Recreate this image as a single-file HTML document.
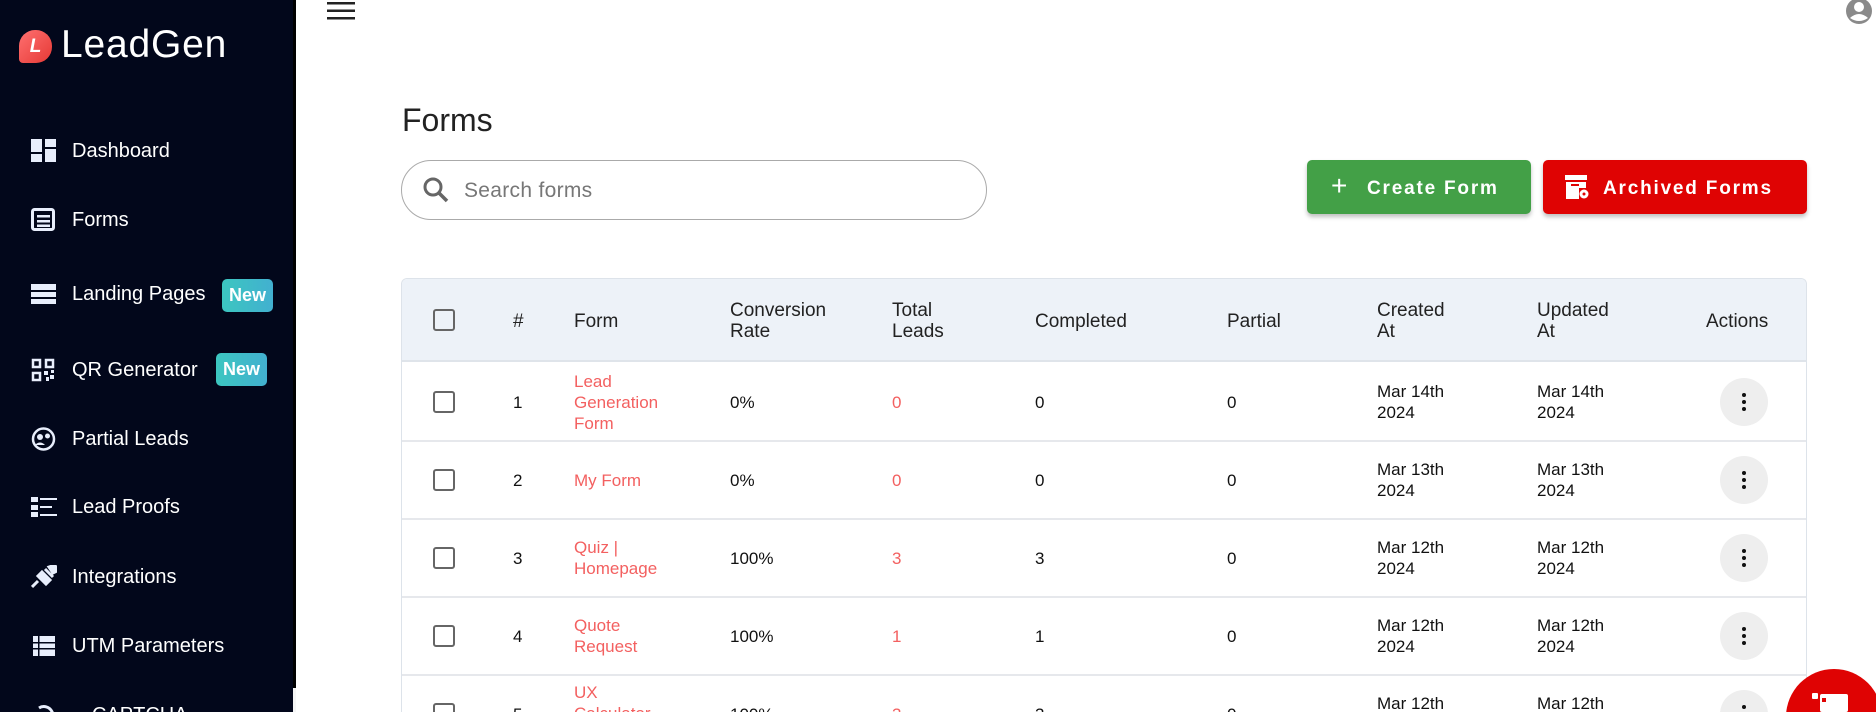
<!DOCTYPE html>
<html><head><meta charset="utf-8"><style>
*{box-sizing:border-box;margin:0;padding:0}
html,body{width:1876px;height:712px;overflow:hidden}
body{background:#fff;font-family:"Liberation Sans",sans-serif;position:relative;color:#111}
.wrap{position:absolute;left:0;top:0;width:1876px;height:712px;overflow:hidden}
.sb{position:absolute;left:0;top:0;width:293px;height:712px;background:#02071b}
.sbedge{position:absolute;left:293px;top:0;width:3px;height:688px;background:#000}
.logo{position:absolute;left:19px;top:30px;width:33px;height:33px;background:linear-gradient(135deg,#ff7070,#e53935);border-radius:16px 16px 16px 4px;color:#fff;font-weight:bold;font-size:19px;text-align:center;line-height:33px;font-style:italic}
.brand{position:absolute;left:61px;top:22px;color:#fff;font-size:39px;line-height:46px;letter-spacing:0.8px}
.mi{position:absolute;left:0;height:30px;width:293px;color:#fff;font-size:20px}
.mi svg{position:absolute;left:31px;top:3px}
.mi span.t{position:absolute;left:72px;top:4px}
.new{position:absolute;height:33px;width:51px;border-radius:5px;background:linear-gradient(90deg,#3cc6c0,#42b0d0);color:#fff;font-weight:bold;font-size:18px;text-align:center;line-height:33px}
.title{position:absolute;left:402px;top:102px;font-size:32px;color:#222}
.search{position:absolute;left:401px;top:160px;width:586px;height:60px;border:1.5px solid #aaa;border-radius:30px}
.search span{position:absolute;left:62px;top:18px;font-size:21px;color:#777;letter-spacing:0.3px}
.btn{position:absolute;top:160px;height:54px;border-radius:5px;color:#fff;font-weight:bold;font-size:19px;letter-spacing:1.8px;box-shadow:0 3px 4px rgba(0,0,0,.25);line-height:54px}
.tbl{position:absolute;left:401px;top:278px;width:1406px;height:434px;border:1px solid #dde3ea;border-bottom:none;border-radius:6px 6px 0 0;overflow:hidden}
.hd{position:absolute;left:0;top:0;width:100%;height:83px;background:#edf2f8;border-bottom:2px solid #dfe4ea}
.c{position:absolute;font-size:19px;line-height:21px;color:#222}
.r{position:absolute;font-size:17px;line-height:21px;color:#111}
.red{color:#f36060}
.line{position:absolute;left:0;width:100%;height:2px;background:#e6e8ec}
.cb{position:absolute;width:22px;height:22px;border:2.5px solid #666;border-radius:3px}
.act{position:absolute;width:48px;height:48px;border-radius:24px;background:#eee}
.act i{position:absolute;left:22px;width:4px;height:4px;border-radius:2px;background:#111}
</style></head><body><div class="wrap">
<div class="sb"></div><div class="sbedge"></div>
<div class="logo">L</div>
<div class="brand">LeadGen</div>

<div class="mi" style="top:136px"><svg width="26" height="24" viewBox="0 0 26 24"><rect x="0" y="0" width="11" height="13" fill="#e8eefc"/><rect x="0" y="15" width="11" height="8" fill="#e8eefc"/><rect x="14" y="0" width="11" height="8" fill="#e8eefc"/><rect x="14" y="10" width="11" height="13" fill="#e8eefc"/></svg><span class="t">Dashboard</span></div>
<div class="mi" style="top:205px"><svg width="26" height="24" viewBox="0 0 26 24"><rect x="1.5" y="1.5" width="21" height="20" rx="2" fill="none" stroke="#e8eefc" stroke-width="3"/><rect x="6" y="7" width="13" height="2.5" fill="#e8eefc"/><rect x="6" y="12" width="13" height="2.5" fill="#e8eefc"/><rect x="6" y="16.5" width="13" height="2.5" fill="#e8eefc"/></svg><span class="t">Forms</span></div>
<div class="mi" style="top:279px"><svg width="26" height="24" viewBox="0 0 26 24"><rect x="0" y="2" width="25" height="6" fill="#e8eefc"/><rect x="0" y="10" width="25" height="5" fill="#e8eefc"/><rect x="0" y="17" width="25" height="5" fill="#e8eefc"/></svg><span class="t">Landing Pages</span></div>
<div class="new" style="left:222px;top:279px">New</div>
<div class="mi" style="top:355px"><svg width="26" height="24" viewBox="0 0 26 24"><g fill="none" stroke="#e8eefc" stroke-width="2.5"><rect x="2" y="2" width="7" height="7"/><rect x="15" y="2" width="7" height="7"/><rect x="2" y="15" width="7" height="7"/></g><rect x="13" y="13" width="4" height="4" fill="#e8eefc"/><rect x="19" y="17" width="4" height="4" fill="#e8eefc"/><rect x="15" y="19" width="3" height="4" fill="#e8eefc"/><rect x="20" y="12" width="3" height="3" fill="#e8eefc"/></svg><span class="t">QR Generator</span></div>
<div class="new" style="left:216px;top:353px">New</div>
<div class="mi" style="top:424px"><svg width="26" height="24" viewBox="0 0 26 24"><circle cx="12.5" cy="12" r="10.5" fill="none" stroke="#e8eefc" stroke-width="2.5"/><circle cx="9" cy="10" r="3" fill="#e8eefc"/><circle cx="16.5" cy="9" r="2.5" fill="#e8eefc"/><path d="M4 18 Q9 13 14 18" fill="#e8eefc"/></svg><span class="t">Partial Leads</span></div>
<div class="mi" style="top:492px"><svg width="26" height="24" viewBox="0 0 26 24"><rect x="0" y="2" width="7" height="5" fill="#e8eefc"/><rect x="9" y="3" width="17" height="2" fill="#e8eefc"/><rect x="0" y="10" width="7" height="5" fill="#e8eefc"/><rect x="9" y="11" width="12" height="2" fill="#e8eefc"/><rect x="0" y="17" width="7" height="5" fill="#e8eefc"/><rect x="9" y="19" width="17" height="2" fill="#e8eefc"/></svg><span class="t">Lead Proofs</span></div>
<div class="mi" style="top:562px"><svg width="26" height="24" viewBox="0 0 26 24"><path d="M1 22 L7 16 M14 4 L22 12 M11 7 L19 15 L15 19 L7 11Z M18 2 L24 0 L26 6 L22 8Z" stroke="#e8eefc" stroke-width="3" fill="#e8eefc"/></svg><span class="t">Integrations</span></div>
<div class="mi" style="top:631px"><svg width="26" height="24" viewBox="0 0 26 24"><rect x="2" y="2" width="22" height="20" fill="#e8eefc"/><rect x="2" y="8" width="22" height="1.5" fill="#02071b"/><rect x="2" y="14" width="22" height="1.5" fill="#02071b"/><rect x="7" y="2" width="1.5" height="20" fill="#02071b"/></svg><span class="t">UTM Parameters</span></div>
<div class="mi" style="top:700px;height:12px;overflow:hidden"><svg width="26" height="24" viewBox="0 0 26 24"><path d="M4 14 A9 9 0 1 0 8 5" fill="none" stroke="#e8eefc" stroke-width="3"/></svg><span class="t" style="left:92px">CAPTCHA</span></div>
<div style="position:absolute;left:293px;top:688px;width:3px;height:24px;background:#f5f5f5"></div>

<svg style="position:absolute;left:327px;top:2px" width="28" height="18"><rect y="0" width="28" height="2.5" fill="#222"/><rect y="7.5" width="28" height="2.5" fill="#222"/><rect y="15" width="28" height="2.5" fill="#222"/></svg>
<svg style="position:absolute;left:1845px;top:0" width="28" height="26" viewBox="0 0 28 26"><circle cx="14" cy="11" r="13" fill="#8a8a8a"/><circle cx="14" cy="7" r="5" fill="#fff"/><path d="M5 18 Q14 10 23 18 Q14 24 5 18Z" fill="#fff"/></svg>

<div class="title">Forms</div>
<div class="search"><svg style="position:absolute;left:20px;top:15px" width="28" height="28" viewBox="0 0 28 28"><circle cx="11" cy="11" r="8" fill="none" stroke="#666" stroke-width="3"/><path d="M17 17 L25 25" stroke="#666" stroke-width="3.5"/></svg><span>Search forms</span></div>

<div class="btn" style="left:1307px;width:224px;background:#43a047"><span style="position:absolute;left:24px;top:-1px;font-size:28px;font-weight:normal">+</span><span style="position:absolute;left:60px;top:2px">Create Form</span></div>
<div class="btn" style="left:1543px;width:264px;background:#df0303"><svg style="position:absolute;left:22px;top:15px" width="26" height="26" viewBox="0 0 26 26"><rect x="0" y="0" width="22" height="5" fill="#fff"/><path d="M1 7 H21 V13 H14 V24 H1Z" fill="#fff"/><rect x="6" y="9" width="8" height="2" fill="#df0303"/><circle cx="19" cy="19" r="4.5" fill="#fff"/><circle cx="19" cy="19" r="1.5" fill="#df0303"/></svg><span style="position:absolute;left:60px;top:2px">Archived Forms</span></div>

<div class="tbl">
<div class="hd"></div>
<div class="cb" style="left:31px;top:30px"></div>
<div class="c" style="left:111px;top:32px">#</div>
<div class="c" style="left:172px;top:32px">Form</div>
<div class="c" style="left:328px;top:21px">Conversion<br>Rate</div>
<div class="c" style="left:490px;top:21px">Total<br>Leads</div>
<div class="c" style="left:633px;top:32px">Completed</div>
<div class="c" style="left:825px;top:32px">Partial</div>
<div class="c" style="left:975px;top:21px">Created<br>At</div>
<div class="c" style="left:1135px;top:21px">Updated<br>At</div>
<div class="c" style="left:1304px;top:32px">Actions</div>

<div class="cb" style="left:31px;top:112px"></div>
<div class="r" style="left:111px;top:113px">1</div>
<div class="r red" style="left:172px;top:92px">Lead<br>Generation<br>Form</div>
<div class="r" style="left:328px;top:113px">0%</div>
<div class="r red" style="left:490px;top:113px">0</div>
<div class="r" style="left:633px;top:113px">0</div>
<div class="r" style="left:825px;top:113px">0</div>
<div class="r" style="left:975px;top:102px">Mar 14th<br>2024</div>
<div class="r" style="left:1135px;top:102px">Mar 14th<br>2024</div>
<div class="act" style="left:1318px;top:99px"><i style="top:15px"></i><i style="top:22px"></i><i style="top:29px"></i></div>
<div class="line" style="top:161px"></div>

<div class="cb" style="left:31px;top:190px"></div>
<div class="r" style="left:111px;top:191px">2</div>
<div class="r red" style="left:172px;top:191px">My Form</div>
<div class="r" style="left:328px;top:191px">0%</div>
<div class="r red" style="left:490px;top:191px">0</div>
<div class="r" style="left:633px;top:191px">0</div>
<div class="r" style="left:825px;top:191px">0</div>
<div class="r" style="left:975px;top:180px">Mar 13th<br>2024</div>
<div class="r" style="left:1135px;top:180px">Mar 13th<br>2024</div>
<div class="act" style="left:1318px;top:177px"><i style="top:15px"></i><i style="top:22px"></i><i style="top:29px"></i></div>
<div class="line" style="top:239px"></div>

<div class="cb" style="left:31px;top:268px"></div>
<div class="r" style="left:111px;top:269px">3</div>
<div class="r red" style="left:172px;top:258px">Quiz |<br>Homepage</div>
<div class="r" style="left:328px;top:269px">100%</div>
<div class="r red" style="left:490px;top:269px">3</div>
<div class="r" style="left:633px;top:269px">3</div>
<div class="r" style="left:825px;top:269px">0</div>
<div class="r" style="left:975px;top:258px">Mar 12th<br>2024</div>
<div class="r" style="left:1135px;top:258px">Mar 12th<br>2024</div>
<div class="act" style="left:1318px;top:255px"><i style="top:15px"></i><i style="top:22px"></i><i style="top:29px"></i></div>
<div class="line" style="top:317px"></div>

<div class="cb" style="left:31px;top:346px"></div>
<div class="r" style="left:111px;top:347px">4</div>
<div class="r red" style="left:172px;top:336px">Quote<br>Request</div>
<div class="r" style="left:328px;top:347px">100%</div>
<div class="r red" style="left:490px;top:347px">1</div>
<div class="r" style="left:633px;top:347px">1</div>
<div class="r" style="left:825px;top:347px">0</div>
<div class="r" style="left:975px;top:336px">Mar 12th<br>2024</div>
<div class="r" style="left:1135px;top:336px">Mar 12th<br>2024</div>
<div class="act" style="left:1318px;top:333px"><i style="top:15px"></i><i style="top:22px"></i><i style="top:29px"></i></div>
<div class="line" style="top:395px"></div>

<div class="cb" style="left:31px;top:424px"></div>
<div class="r" style="left:111px;top:425px">5</div>
<div class="r red" style="left:172px;top:403px">UX<br>Calculator</div>
<div class="r" style="left:328px;top:425px">100%</div>
<div class="r red" style="left:490px;top:425px">3</div>
<div class="r" style="left:633px;top:425px">3</div>
<div class="r" style="left:825px;top:425px">0</div>
<div class="r" style="left:975px;top:414px">Mar 12th<br>2024</div>
<div class="r" style="left:1135px;top:414px">Mar 12th<br>2024</div>
<div class="act" style="left:1318px;top:411px"><i style="top:15px"></i><i style="top:22px"></i><i style="top:29px"></i></div>
</div>

<svg style="position:absolute;left:1786px;top:669px" width="90" height="43" viewBox="0 0 90 43"><circle cx="48" cy="48" r="48" fill="#df0303"/><rect x="34" y="25" width="28" height="18" rx="2" fill="#fff"/><rect x="26" y="24" width="6" height="6" rx="1" fill="#fff"/><rect x="36" y="29" width="4" height="4" fill="#df0303"/></svg>
</div></body></html>
